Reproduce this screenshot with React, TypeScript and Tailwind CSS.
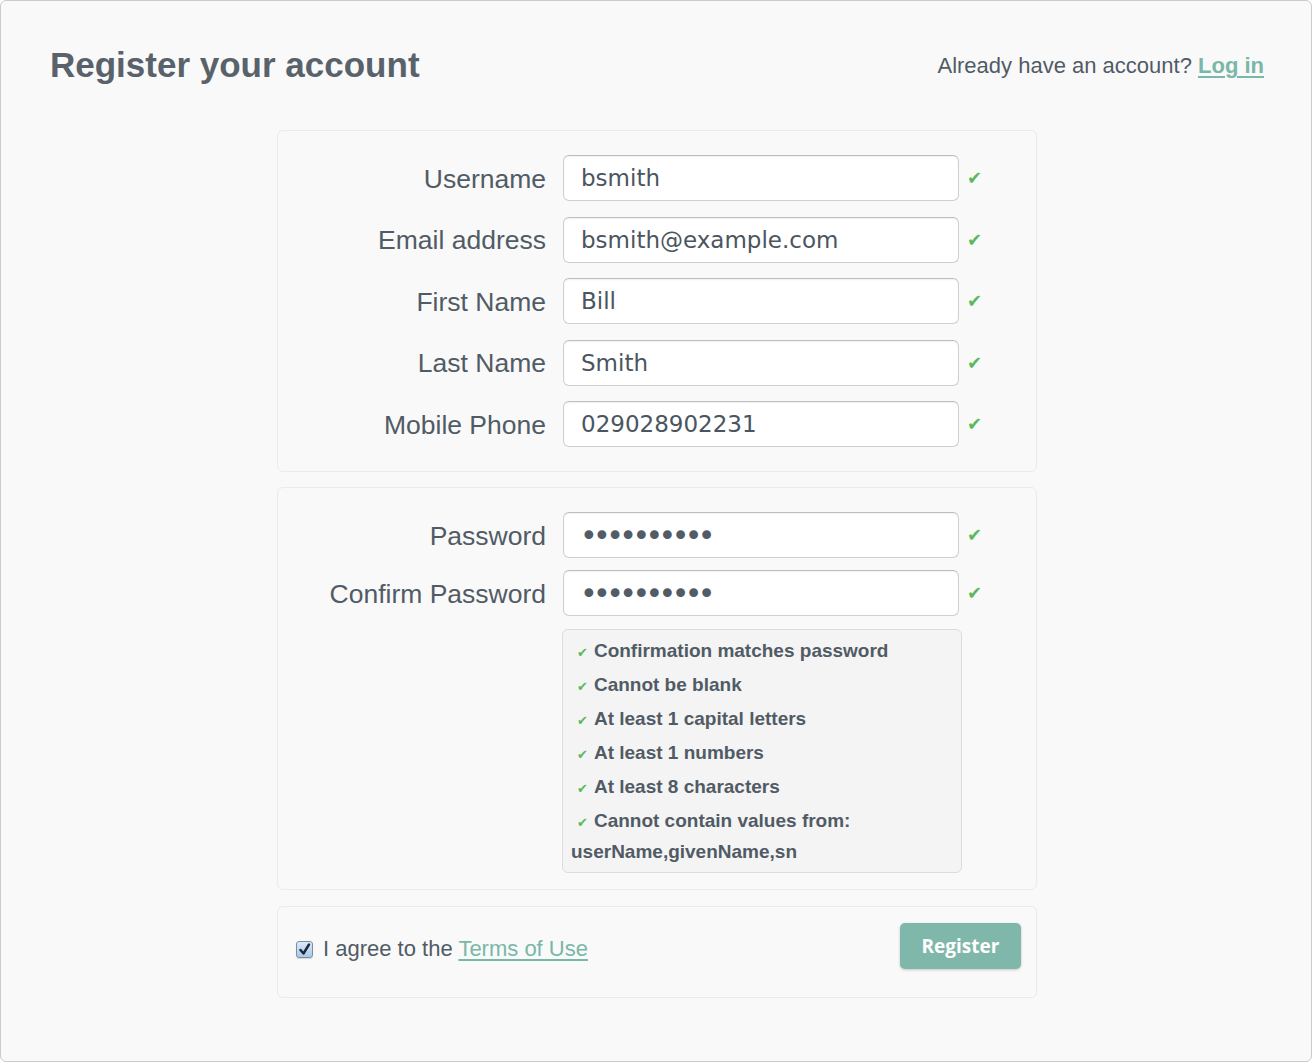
import React from 'react'

const fields = [
  { label: 'Username', value: 'bsmith' },
  { label: 'Email address', value: 'bsmith@example.com' },
  { label: 'First Name', value: 'Bill' },
  { label: 'Last Name', value: 'Smith' },
  { label: 'Mobile Phone', value: '029028902231' },
]

const rules = [
  'Confirmation matches password',
  'Cannot be blank',
  'At least 1 capital letters',
  'At least 1 numbers',
  'At least 8 characters',
]

function Check({ small }: { small?: boolean }) {
  return (
    <span
      className={
        small
          ? "text-[#5cb85c] font-['DejaVu_Sans',sans-serif] text-[13px] leading-none mr-[6px] ml-[6px]"
          : "text-[#5cb85c] font-['DejaVu_Sans',sans-serif] text-[18px] leading-none"
      }
    >
      ✔
    </span>
  )
}

function Row({ label, value, type = 'text' }: { label: string; value: string; type?: string }) {
  const pw = type === 'password'
  return (
    <div className="flex items-center">
      <label className="w-[268px] pt-[2px] text-right text-[26.5px] leading-none text-[#515b65]">{label}</label>
      <input
        type={type}
        readOnly
        defaultValue={value}
        className={
          pw
            ? "ml-[17px] w-[396px] h-[46px] rounded-[6px] border border-[#cfcfcf] border-t-[#bdbdbd] bg-white pl-[16px] pr-3 text-[30px] tracking-[-4.6px] text-[#525c66] font-['DejaVu_Sans',sans-serif] shadow-[inset_0_1px_2px_rgba(0,0,0,0.06)] outline-none"
            : "ml-[17px] w-[396px] h-[46px] rounded-[6px] border border-[#cfcfcf] border-t-[#bdbdbd] bg-white pl-[17px] pr-3 text-[23px] text-[#4a5560] font-['DejaVu_Sans',sans-serif] shadow-[inset_0_1px_2px_rgba(0,0,0,0.06)] outline-none"
        }
      />
      <span className="ml-[8px] mt-[2px]">
        <Check />
      </span>
    </div>
  )
}

export default function App() {
  return (
    <div className="w-[1312px] h-[1062px] bg-white font-['Liberation_Sans',Arial,sans-serif]">
      <div className="w-full h-full rounded-[6px] border border-[#cbcbcb] bg-[#f9f9f9]">
        <div className="h-[129px] flex justify-between pl-[49px] pr-[47px]">
          <h1 className="mt-[46px] text-[35px] leading-none font-bold text-[#59626a]">Register your account</h1>
          <div className="mt-[54px] text-[22px] leading-none text-[#515b65]">
            Already have an account?{' '}
            <a href="#" className="font-bold text-[#79b7a8] underline underline-offset-[3px]">
              Log in
            </a>
          </div>
        </div>

        <div className="ml-[276px] w-[760px] flex flex-col">
          <div className="rounded-[6px] border border-[#ebebeb] pt-[24px] pb-[24px] flex flex-col gap-[15.5px]">
            {fields.map((f) => (
              <Row key={f.label} label={f.label} value={f.value} />
            ))}
          </div>

          <div className="mt-[15px] rounded-[6px] border border-[#ebebeb] pt-[24px] pb-[16px]">
            <div className="flex flex-col gap-[12px]">
              <Row label="Password" value="password12" type="password" />
              <Row label="Confirm Password" value="password12" type="password" />
            </div>
            <div className="ml-[284px] mt-[13px] w-[400px] rounded-[6px] border border-[#dcdcdc] bg-[#f4f4f4] px-[8px] pt-[3px] pb-[4px] text-[19px] leading-[31px] font-bold text-[#515b65]">
              {rules.map((r) => (
                <div key={r} className="py-[1.5px]">
                  <Check small />
                  {r}
                </div>
              ))}
              <div className="py-[1.5px]">
                <Check small />
                Cannot contain values from:
                <br />
                userName,givenName,sn
              </div>
            </div>
          </div>

          <div className="mt-[16px] h-[92px] rounded-[6px] border border-[#ebebeb] flex items-start justify-between pl-[18px] pr-[15px] pt-[16px]">
            <label className="mt-[15px] flex items-center text-[22px] leading-none text-[#515b65]">
              <span className="w-[17px] h-[17px] rounded-[3px] border border-[#7d8ea3] bg-gradient-to-b from-[#dbe9f8] to-[#a9c8ea] flex items-center justify-center shadow-[0_1px_1px_rgba(0,0,0,0.15)]">
                <svg width="13" height="13" viewBox="0 0 13 13">
                  <path d="M2.5 7 L5.5 10.5 L11 1.5" fill="none" stroke="#1d2838" strokeWidth="2.4" strokeLinecap="round" strokeLinejoin="round" />
                </svg>
              </span>
              <span className="ml-[10px]">
                I agree to the{' '}
                <a href="#" className="text-[#79b7a8] underline underline-offset-[3px]">
                  Terms of Use
                </a>
              </span>
            </label>
            <button className="w-[121px] h-[46px] rounded-[5px] bg-[#7fb8aa] text-white text-[19px] font-bold font-['Open_Sans',sans-serif] shadow-[0_1px_3px_rgba(0,0,0,0.2)]">
              Register
            </button>
          </div>
        </div>
      </div>
    </div>
  )
}
